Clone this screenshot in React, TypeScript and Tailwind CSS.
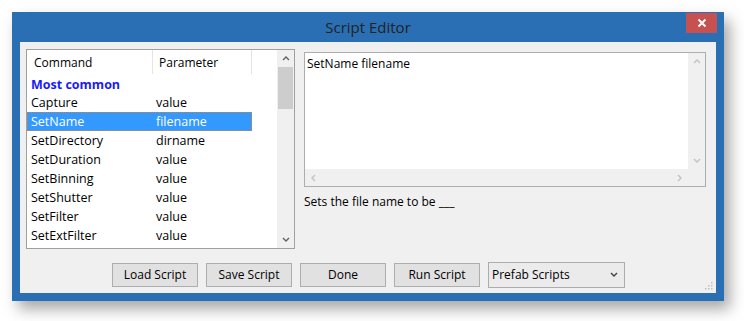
import React from "react";

const rows: [string, string][] = [
  ["Capture", "value"],
  ["SetName", "filename"],
  ["SetDirectory", "dirname"],
  ["SetDuration", "value"],
  ["SetBinning", "value"],
  ["SetShutter", "value"],
  ["SetFilter", "value"],
  ["SetExtFilter", "value"],
];

const Chev = ({ dir, color = "#606060" }: { dir: "up" | "down" | "left" | "right"; color?: string }) => {
  const pts: Record<string, string> = {
    up: "1,5 4,2 7,5",
    down: "1,2 4,5 7,2",
    left: "5,1 2,4 5,7",
    right: "2,1 5,4 2,7",
  };
  return (
    <svg width="8" height="8" viewBox="0 0 8 8">
      <polyline points={pts[dir]} fill="none" stroke={color} strokeWidth="1.4" />
    </svg>
  );
};

const Btn = ({ label }: { label: string }) => (
  <div className="w-[86px] h-[24px] border border-[#adadad] bg-[#e1e1e1] flex items-center justify-center text-[12px] text-black">
    {label}
  </div>
);

export default function App() {
  return (
    <div
      className="w-[744px] h-[321px] bg-white pl-[12px] pt-[12px] overflow-hidden"
      style={{ fontFamily: '"Open Sans", "Noto Sans", sans-serif' }}
    >
      <div className="w-[712px] h-[289px] bg-[#2a6fb3] flex flex-col shadow-[6px_8px_14px_rgba(0,0,0,0.35)]">
        {/* title bar */}
        <div className="h-[30px] flex items-center relative shrink-0">
          <div className="flex-1 text-center text-[15px] text-[#222] pt-[1px]">Script Editor</div>
          <div className="absolute right-[7px] top-[1px] w-[31px] h-[20px] bg-[#c75050] flex items-center justify-center">
            <svg width="10" height="10" viewBox="0 0 10 10">
              <path d="M1.5 1.5 L8.5 8.5 M8.5 1.5 L1.5 8.5" stroke="white" strokeWidth="2" />
            </svg>
          </div>
        </div>
        {/* content */}
        <div className="mx-[8px] h-[251px] bg-[#f0f0f0] relative text-[12px] text-black">
          <div className="flex pl-[6px] pt-[7px]">
            {/* list box */}
            <div className="w-[269px] h-[200px] border border-[#a0a0a0] bg-white flex">
              <div className="w-[250px] flex flex-col">
                <div className="h-[24px] flex items-center text-[12px] text-[12.5px]">
                  <div className="w-[126px] h-full border-r border-[#e5e5e5] flex items-center pl-[7px] pt-[1px]">Command</div>
                  <div className="w-[99px] h-full border-r border-[#e5e5e5] flex items-center pl-[6px] pt-[1px]">Parameter</div>
                </div>
                <div className="h-[19px] flex items-center pl-[4px] pt-[3px] font-bold text-[#1a1aff] text-[12.5px]">Most common</div>
                {rows.map(([c, p]) => {
                  const sel = c === "SetName";
                  return (
                    <div
                      key={c}
                      className={
                        sel
                          ? "h-[19px] w-[225px] flex items-center pt-[1px] text-[12.5px] bg-[#3399ff] text-white border border-dotted border-[#d9822b]"
                          : "h-[19px] w-[225px] flex items-center pt-[1px] text-[12.5px] border border-transparent"
                      }
                    >
                      <div className="w-[125px] pl-[3px]">{c}</div>
                      <div className="pl-[3px]">{p}</div>
                    </div>
                  );
                })}
              </div>
              <div className="w-[17px] ml-auto bg-[#f0f0f0] flex flex-col">
                <div className="h-[17px] flex items-center justify-center">
                  <Chev dir="up" />
                </div>
                <div className="h-[42px] mx-[1px] bg-[#cdcdcd]" />
                <div className="flex-1" />
                <div className="h-[17px] flex items-center justify-center">
                  <Chev dir="down" />
                </div>
              </div>
            </div>
            {/* right column */}
            <div className="ml-[9px] pt-[3px] flex flex-col">
              <div className="w-[402px] h-[135px] border border-[#abadb3] bg-white flex flex-col">
                <div className="flex flex-1">
                  <div className="flex-1 pl-[2px] pt-[2px] leading-[17px]">SetName filename</div>
                  <div className="w-[17px] bg-[#f0f0f0] flex flex-col justify-between">
                    <div className="h-[17px] flex items-center justify-center">
                      <Chev dir="up" color="#c2c2c2" />
                    </div>
                    <div className="h-[17px] flex items-center justify-center">
                      <Chev dir="down" color="#c2c2c2" />
                    </div>
                  </div>
                </div>
                <div className="h-[17px] bg-[#f0f0f0] flex items-center justify-between">
                  <div className="w-[17px] flex justify-center">
                    <Chev dir="left" color="#c2c2c2" />
                  </div>
                  <div className="w-[17px] mr-[17px] flex justify-center">
                    <Chev dir="right" color="#c2c2c2" />
                  </div>
                </div>
              </div>
              <div className="mt-[6px] leading-[17px]">Sets the file name to be ___</div>
            </div>
          </div>
          {/* buttons */}
          <div className="flex gap-[8px] ml-[92px] mt-[13px] items-center">
            <Btn label="Load Script" />
            <Btn label="Save Script" />
            <Btn label="Done" />
            <Btn label="Run Script" />
            <div className="w-[137px] h-[26px] border border-[#acacac] bg-[#ebebeb] flex items-start justify-between pl-[3px] pr-[6px] pt-[3px]">
              <span>Prefab Scripts</span>
              <span className="pt-[5px]">
                <Chev dir="down" color="#404040" />
              </span>
            </div>
          </div>
          {/* resize grip */}
          <svg className="absolute right-[3px] bottom-[3px]" width="8" height="8" viewBox="0 0 8 8">
            <rect x="6" y="0" width="1.5" height="1.5" fill="#c0c0c0" />
            <rect x="3" y="3" width="1.5" height="1.5" fill="#c0c0c0" />
            <rect x="6" y="3" width="1.5" height="1.5" fill="#c0c0c0" />
            <rect x="0" y="6" width="1.5" height="1.5" fill="#c0c0c0" />
            <rect x="3" y="6" width="1.5" height="1.5" fill="#c0c0c0" />
            <rect x="6" y="6" width="1.5" height="1.5" fill="#c0c0c0" />
          </svg>
        </div>
      </div>
    </div>
  );
}
